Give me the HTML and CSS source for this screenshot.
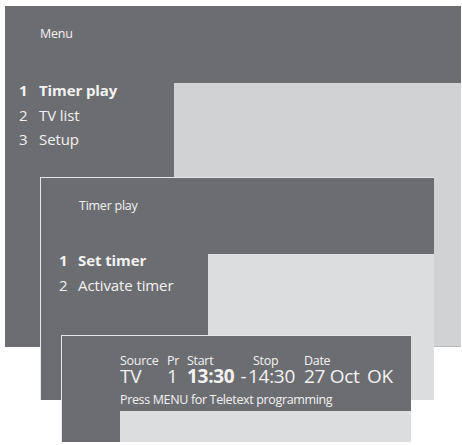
FILE: index.html
```html
<!DOCTYPE HTML>
<html>
    <head>
        <meta charset="UTF-8">
        <title>Timer play</title>
        <link rel="stylesheet" href="styles.css">
    </head>
    <body>
        <div class="stage">
            <!-- main menu -->
            <div class="janela menu">
                <div class="topo"><span class="titulo">Menu</span></div>
                <div class="corpo">
                    <ol class="lista">
                        <li class="ativo"><span class="num">1</span>Timer play</li>
                        <li><span class="num">2</span>TV list</li>
                        <li><span class="num">3</span>Setup</li>
                    </ol>
                    <div class="painel"></div>
                </div>
            </div>

            <!-- timer play -->
            <div class="janela timer">
                <div class="topo"><span class="titulo">Timer play</span></div>
                <div class="corpo">
                    <ol class="lista">
                        <li class="ativo"><span class="num">1</span>Set timer</li>
                        <li><span class="num">2</span>Activate timer</li>
                    </ol>
                    <div class="painel"></div>
                </div>
            </div>

            <!-- set timer -->
            <div class="janela set">
                <div class="topo">
                    <div class="tabela">
                        <span class="rot">Source</span>
                        <span class="rot">Pr</span>
                        <span class="rot">Start</span>
                        <span class="rot"></span>
                        <span class="rot stop">Stop</span>
                        <span class="rot">Date</span>
                        <span class="rot"></span>

                        <span class="val">TV</span>
                        <span class="val">1</span>
                        <span class="val forte">13:30</span>
                        <span class="val traco">-</span>
                        <span class="val">14:30</span>
                        <span class="val">27 Oct</span>
                        <span class="val">OK</span>
                    </div>
                    <p class="aviso">Press MENU for Teletext programming</p>
                </div>
                <div class="corpo">
                    <div class="margem"></div>
                    <div class="painel"></div>
                </div>
            </div>
        </div>
    </body>
</html>
```

FILE: styles.css
```css
body{
    margin: 0;
    background: #fff;
    font-family: "Open Sans", sans-serif;
    color: #f2f2f2;
}
.stage{
    position: relative;
    width: 462px;
    height: 445px;
    overflow: hidden;
}
.janela{
    position: absolute;
    display: flex;
    flex-direction: column;
    background: #6c6d71;
    box-sizing: border-box;
}
.topo{
    box-sizing: border-box;
    flex: none;
}
.corpo{
    flex: 1;
    display: flex;
}
.painel{
    flex: 1;
}
.titulo{
    display: block;
    font-size: 12.5px;
    line-height: 16px;
    letter-spacing: -0.25px;
}
.lista{
    list-style: none;
    margin: 0;
    padding: 0;
    font-size: 15px;
    line-height: 24.5px;
    letter-spacing: -0.1px;
}
.num{
    display: inline-block;
}
.ativo{
    font-weight: bold;
}

/* main menu */
.menu{
    left: 5px;
    top: 6px;
    width: 456px;
    height: 341px;
}
.menu .topo{
    height: 77px;
    padding: 20px 0 0 35px;
}
.menu .lista{
    width: 169px;
    margin-top: -5px;
    padding-left: 14px;
    box-sizing: border-box;
}
.menu .num{
    width: 20px;
}
.menu .painel{
    background: #d1d2d4;
    border-bottom: 1px solid #b9babd;
}

/* timer play */
.timer{
    left: 40px;
    top: 177px;
    width: 394px;
    height: 223px;
    border: 1px solid #e6e6e8;
    border-right: 0;
    border-bottom: 0;
}
.timer .topo{
    height: 76px;
    padding: 20px 0 0 38px;
}
.timer .lista{
    width: 167px;
    margin-top: -6px;
    padding-left: 18px;
    box-sizing: border-box;
}
.timer .num{
    width: 19px;
}
.timer .painel{
    background: #dcdddf;
}

/* set timer */
.set{
    left: 61px;
    top: 335px;
    width: 350px;
    height: 107px;
    border: 1px solid #e6e6e8;
    border-right: 0;
    border-bottom: 0;
}
.set .topo{
    height: 75px;
    padding: 18px 0 0 58px;
}
.set .margem{
    width: 58px;
}
.set .painel{
    background: #dcdddf;
}
.tabela{
    display: grid;
    grid-template-columns: 47px 20px 52px 9px 56px 63px auto;
    align-items: baseline;
}
.rot{
    font-size: 12.5px;
    line-height: 13px;
    letter-spacing: -0.3px;
}
.stop{
    padding-left: 5px;
}
.val{
    font-size: 19px;
    line-height: 19px;
    letter-spacing: -0.3px;
}
.traco{
    justify-self: center;
}
.forte{
    font-weight: bold;
}
.aviso{
    margin: 6px 0 0;
    font-size: 12.5px;
    line-height: 16px;
    letter-spacing: -0.35px;
}
```
